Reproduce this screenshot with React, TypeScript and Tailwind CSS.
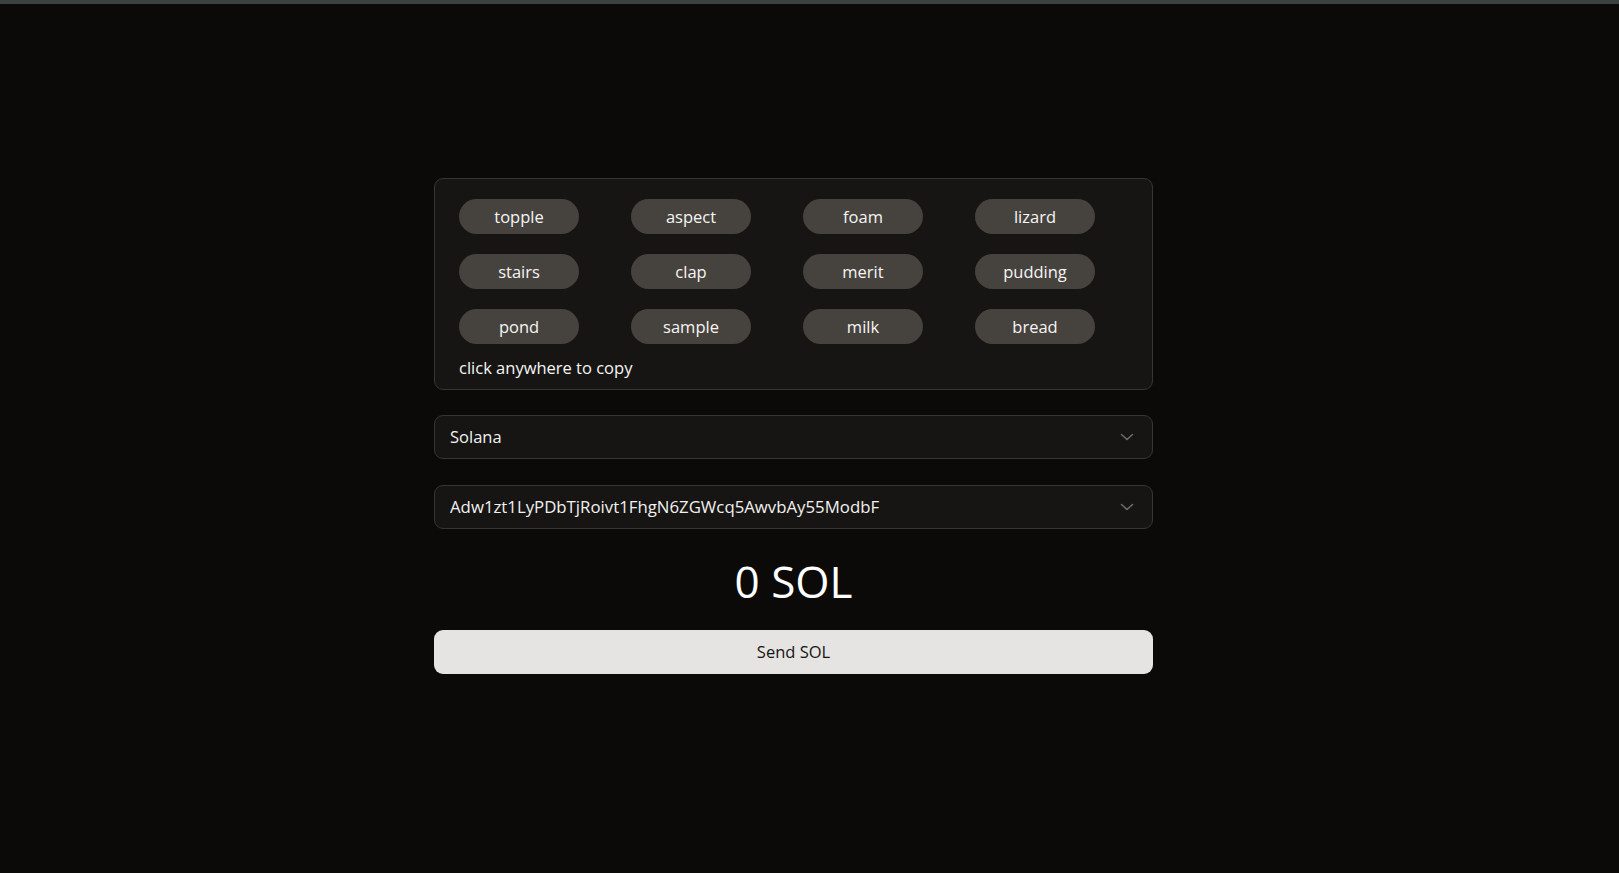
import React from "react";

const words = [
  "topple", "aspect", "foam", "lizard",
  "stairs", "clap", "merit", "pudding",
  "pond", "sample", "milk", "bread",
];

function Chevron() {
  return (
    <svg width="14" height="8" viewBox="0 0 14 8" fill="none" className="shrink-0">
      <path d="M1.5 1.5 L7 6.5 L12.5 1.5" stroke="#6f6d6a" strokeWidth="1.5" strokeLinecap="round" strokeLinejoin="round" />
    </svg>
  );
}

function SelectBox({ value, size }: { value: string; size: string }) {
  return (
    <div className="flex h-[44px] items-center justify-between rounded-[9px] border border-[#363533] bg-[#161514] pl-[15px] pr-[18px] leading-6 text-[#f2f1ef]">
      <span className={size}>{value}</span>
      <Chevron />
    </div>
  );
}

export default function App() {
  return (
    <div
      className="min-h-screen bg-[#0b0a09] text-white"
      style={{ fontFamily: '"Open Sans", "Noto Sans", sans-serif' }}
    >
      <div className="h-1 bg-[#3a4341]" />
      <div className="flex justify-center pr-[32px] pt-[174px]">
        <div className="flex w-[719px] flex-col">
          <div className="rounded-[9px] border border-[#363533] bg-[#161514] px-[24px] pb-[9px] pt-[20px]">
            <div className="grid grid-cols-[repeat(4,120px)] gap-x-[52px] gap-y-[20px]">
              {words.map((w) => (
                <div
                  key={w}
                  className="flex h-[35px] items-center justify-center rounded-full bg-[#46433f] text-[16.5px] leading-6 text-[#f6f5f3]"
                >
                  {w}
                </div>
              ))}
            </div>
            <div className="mt-[12px] text-[16.5px] leading-6 text-[#f6f5f3]">click anywhere to copy</div>
          </div>

          <div className="mt-[25px]">
            <SelectBox value="Solana" size="text-[16.5px]" />
          </div>
          <div className="mt-[26px]">
            <SelectBox value="Adw1zt1LyPDbTjRoivt1FhgN6ZGWcq5AwvbAy55ModbF" size="text-[16.8px]" />
          </div>

          <div className="mt-[28px] text-center text-[44px] leading-[48px] text-white">0 SOL</div>

          <button className="mt-[25px] h-[44px] rounded-[9px] bg-[#e5e4e2] text-[16.5px] leading-6 text-[#161514]">
            Send SOL
          </button>
        </div>
      </div>
    </div>
  );
}
